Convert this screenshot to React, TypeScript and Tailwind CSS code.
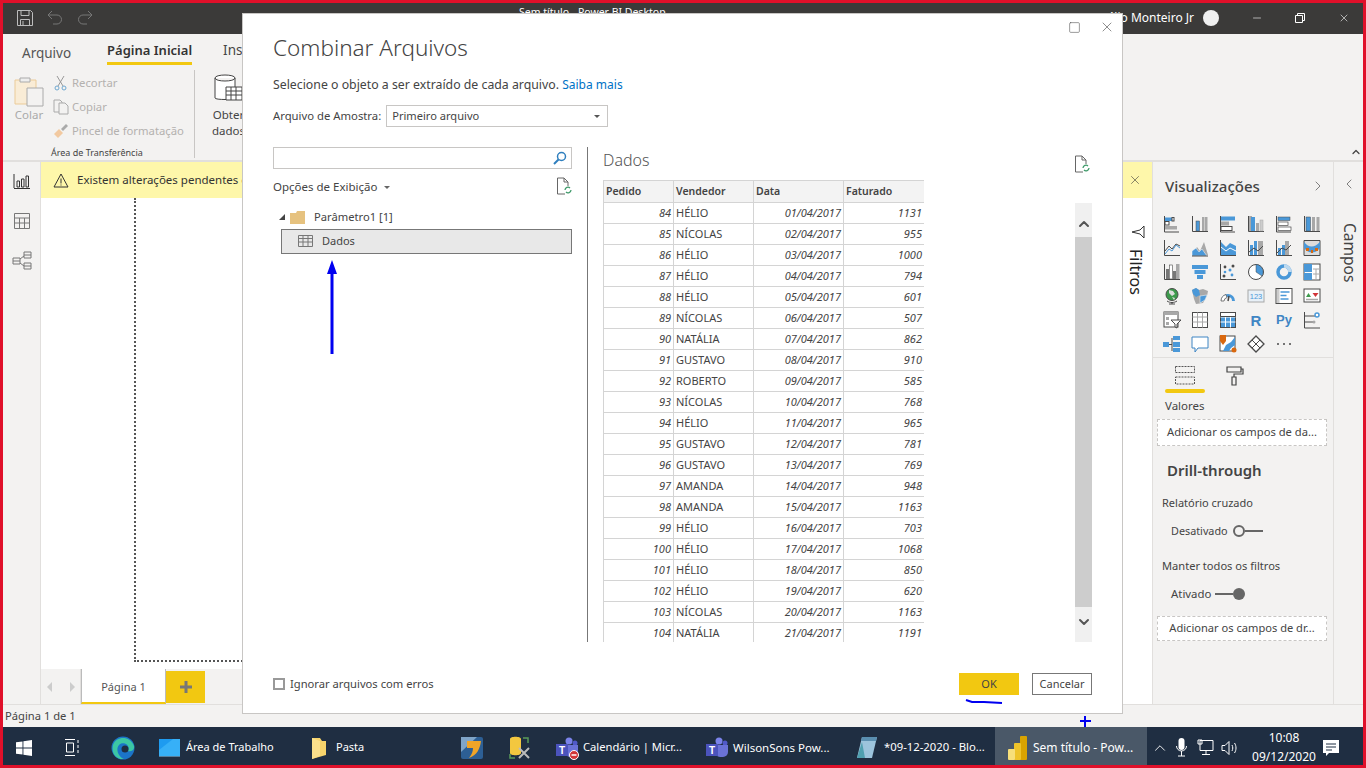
import type { ReactNode } from "react";
import { ChevronDown, ChevronLeft, ChevronRight, ChevronUp, Minus, Square, X } from "lucide-react";

const B = "#4a98d8";
const D = "#4a4a4a";
const G = "#a8a8a8";
const O = "#d9680f";

const rows: [number, string, string, number][] = [
    [84, "HÉLIO", "01/04/2017", 1131],
    [85, "NÍCOLAS", "02/04/2017", 955],
    [86, "HÉLIO", "03/04/2017", 1000],
    [87, "HÉLIO", "04/04/2017", 794],
    [88, "HÉLIO", "05/04/2017", 601],
    [89, "NÍCOLAS", "06/04/2017", 507],
    [90, "NATÁLIA", "07/04/2017", 862],
    [91, "GUSTAVO", "08/04/2017", 910],
    [92, "ROBERTO", "09/04/2017", 585],
    [93, "NÍCOLAS", "10/04/2017", 768],
    [94, "HÉLIO", "11/04/2017", 965],
    [95, "GUSTAVO", "12/04/2017", 781],
    [96, "GUSTAVO", "13/04/2017", 769],
    [97, "AMANDA", "14/04/2017", 948],
    [98, "AMANDA", "15/04/2017", 1163],
    [99, "HÉLIO", "16/04/2017", 703],
    [100, "HÉLIO", "17/04/2017", 1068],
    [101, "HÉLIO", "18/04/2017", 850],
    [102, "HÉLIO", "19/04/2017", 620],
    [103, "NÍCOLAS", "20/04/2017", 1163],
    [104, "NATÁLIA", "21/04/2017", 1191],
];

const axes = <path d="M1.5 1v15.5H17" fill="none" stroke={D} />;
const vaxis = <path d="M1.5 1v15.5M1.5 16.5H17" fill="none" stroke={D} />;
const hbars = <path d="M1.5 1v16M1.5 17H16" fill="none" stroke={D} />;

const vizIcons: ReactNode[] = [
    <>{hbars}<rect x="2" y="2.5" width="7" height="3.5" fill={B} /><rect x="9" y="2.5" width="2" height="3.5" fill="#fff" stroke={D} /><rect x="2" y="6.5" width="4" height="3.5" fill="#fff" stroke={D} /><rect x="2" y="11" width="12" height="3.5" fill={G} /></>,
    <>{vaxis}<rect x="5" y="6" width="3.5" height="10" fill={B} stroke={D} strokeWidth=".5" /><rect x="11" y="2" width="2.5" height="14" fill={G} /><rect x="14" y="2" width="2.5" height="14" fill={G} /></>,
    <>{hbars}<rect x="2" y="1.5" width="14" height="4" fill={B} /><rect x="2" y="6.5" width="8" height="4" fill={G} /><rect x="2" y="11.5" width="11" height="4" fill="#fff" stroke={D} /></>,
    <>{vaxis}<rect x="2" y="1" width="3" height="15" fill={G} /><rect x="4" y="2" width="4" height="14" fill={B} /><rect x="9" y="8" width="3" height="8" fill={G} /><rect x="13" y="5" width="3" height="11" fill="#ccc" stroke={G} strokeWidth=".5" /></>,
    <>{hbars}<rect x="3" y="2" width="12" height="3.5" fill={B} stroke={D} strokeWidth=".5" /><rect x="3" y="7" width="10" height="3.5" fill="#fff" stroke={D} strokeWidth=".7" /><rect x="3" y="12" width="13" height="3.5" fill="#fff" stroke={D} strokeWidth=".7" /></>,
    <>{vaxis}<rect x="3" y="2" width="4.5" height="14" fill={B} stroke={D} strokeWidth=".5" /><rect x="9" y="2" width="3" height="14" fill={G} /><rect x="13.5" y="2" width="3" height="14" fill={G} /></>,
    <>{axes}<path d="M2 12l4-5 3 3 4-5 4 2" fill="none" stroke={D} /><path d="M2 15l4-5 3 2 4-6 4 3" fill="none" stroke={B} /></>,
    <><path d="M1 16l5-8 3 4 4-9 4 13z" fill={G} /><path d="M1 12v5h15l-5-7-3 3-3-4z" fill={B} stroke="#fff" strokeWidth=".5" /><path d="M1 17h16" stroke={D} /></>,
    <>{axes}<path d="M2 3l5 5 4-4 6 3v9H2z" fill={B} /><path d="M2 8l5 4 4-3 6 3" fill="none" stroke="#fff" /></>,
    <>{vaxis}<rect x="3" y="6" width="3" height="10" fill={B} /><rect x="7" y="2" width="3" height="14" fill={B} /><rect x="11" y="2" width="5" height="14" fill={G} /><path d="M2 13l5-4 4 3 5-5" fill="none" stroke={D} /></>,
    <>{vaxis}<rect x="3" y="9" width="3" height="7" fill={B} /><rect x="7" y="6" width="3" height="10" fill={B} /><rect x="10" y="2" width="4" height="14" fill={G} /><path d="M2 14l5-5 4 2 5-5" fill="none" stroke={D} /></>,
    <><path d="M1 1.5h16v15H1z" fill="#dcdcdc" stroke={D} /><path d="M1 3c5 6 10 6 16 0v6c-5 6-11 6-16 0z" fill={B} /><path d="M3 9h3v3H3zM12 9h3v3h-3zM8 11h2v3H8z" fill={O} /></>,
    <>{vaxis}<rect x="3" y="6" width="3" height="10" fill="#777" /><rect x="6.5" y="2" width="3" height="14" fill="#fff" stroke={D} strokeWidth=".6" /><rect x="10" y="8" width="3" height="8" fill="#777" /><rect x="13" y="1" width="3.5" height="15" fill={G} /></>,
    <><rect x="1" y="2" width="16" height="4" fill={B} /><rect x="3.5" y="7" width="11" height="4" fill={B} /><rect x="6" y="12" width="6" height="4" fill={B} /></>,
    <>{axes}<circle cx="6" cy="4" r="1.4" fill={D} /><circle cx="11" cy="7" r="1.5" fill={B} /><circle cx="6" cy="9" r="1.3" fill={B} /><circle cx="14" cy="3" r="1.5" fill={D} /><circle cx="5" cy="13" r="1.5" fill={D} /><circle cx="13" cy="12" r="1.4" fill={B} /></>,
    <><circle cx="9" cy="9" r="7.5" fill="#fff" stroke={D} /><path d="M9 9V1.5a7.5 7.5 0 0 1 6 11.5z" fill={B} stroke={D} strokeWidth=".5" /></>,
    <><circle cx="9" cy="9" r="6" fill="none" stroke={B} strokeWidth="3.5" /><path d="M9 3a6 6 0 0 1 6 6" fill="none" stroke="#bcd9f0" strokeWidth="3.5" /></>,
    <><rect x="1" y="1" width="16" height="16" fill="#fff" stroke={D} /><rect x="1" y="1" width="8" height="8" fill={B} /><rect x="1" y="10" width="8" height="7" fill={B} /><path d="M10 6h7M13 6v11M10 11h7" stroke={G} /></>,
    <><circle cx="9" cy="7.5" r="6" fill="#3d9a4c" stroke={D} /><path d="M6 3l4 1 2 3-3 2-3-3zM9 10l3 1-1 2z" fill="#ddd" /><path d="M4 14c3 2 7 2 10 0M9 15v2M6 17h6" fill="none" stroke={D} /></>,
    <><path d="M1 3l4-2 3 2 4-1 5 2-1 5-4 7-7 1-2-5z" fill={G} /><path d="M1 3l4-2 3 2 1 5-4 2-3-3z" fill={B} /><path d="M9 9l7-1-2 5-5 3z" fill={B} stroke="#fff" strokeWidth=".5" /></>,
    <><path d="M2 14a7 7 0 0 1 14 0h-3a4 4 0 0 0-8 0z" fill={B} /><path d="M2 14a7 7 0 0 1 5-6.5l1 3A4 4 0 0 0 5 14z" fill="#fff" stroke={D} strokeWidth=".7" /><path d="M9 14l1-5" stroke={D} strokeWidth="1.5" /></>,
    <><rect x="1" y="3" width="16" height="12" fill="#e8f0f7" stroke={G} /><text x="9" y="12" textAnchor="middle" fontSize="7.5" fill={B} fontFamily="Liberation Sans, sans-serif">123</text></>,
    <><rect x="1" y="1.5" width="16" height="15" fill="#fff" stroke={D} /><rect x="2" y="2" width="2.5" height="14" fill="#ccc" /><path d="M5.5 5h9M5.5 8.5h6M5.5 12h8" stroke={B} strokeWidth="1.4" /></>,
    <><rect x="1" y="2" width="16" height="13" fill="#fff" stroke={D} /><path d="M3 10l2.5-4L8 10z" fill="#3d9a4c" /><path d="M9.5 6h6L12.5 10z" fill="#d13438" /><path d="M3 12.5h12" stroke={G} strokeWidth="1.5" /></>,
    <><rect x="1" y="1" width="14" height="15" fill="#fff" stroke={D} /><path d="M1 1h14v3H1z" fill={G} /><path d="M3 6h3v3H3zM3 11h3v3H3z" fill={G} /><path d="M8 9h10l-4 4v4l-2-1v-3z" fill="#fff" stroke={D} /></>,
    <><rect x="1.5" y="1.5" width="15" height="15" fill="#fff" stroke={D} /><path d="M1.5 6h15M1.5 11h15M6.5 1.5v15M11.5 1.5v15" stroke={G} /></>,
    <><rect x="1.5" y="1.5" width="15" height="15" fill="#fff" stroke={D} /><rect x="2" y="6" width="14" height="10" fill={B} /><path d="M1.5 6h15M1.5 11h15M6.5 6v10M11.5 1.5v15" stroke="#fff" /><path d="M1.5 1.5h15v4h-15z" fill="none" stroke={D} /></>,
    <text x="9" y="15" textAnchor="middle" fontSize="15" fontWeight="700" fill="#3f86c4" fontFamily="Liberation Sans, sans-serif">R</text>,
    <text x="9" y="13" textAnchor="middle" fontSize="13" fontWeight="700" fill="#3f86c4" fontFamily="Liberation Sans, sans-serif">Py</text>,
    <><path d="M1.5 1v16M1.5 17H17" fill="none" stroke={D} /><path d="M2 5h10M2 11h8" stroke={D} /><circle cx="14" cy="4" r="2" fill="#fff" stroke={B} strokeWidth="1.5" /><circle cx="11" cy="11" r="1.5" fill={G} /></>,
    <><rect x="0" y="7" width="6" height="5" fill={B} /><path d="M6 9.5h3M9 3v13" stroke={D} /><rect x="10" y="1" width="7" height="4" fill={B} /><rect x="10" y="7" width="7" height="5" fill={B} /><rect x="10" y="13" width="7" height="4" fill={B} /></>,
    <path d="M1 2h16v11H7l-3 4v-4H1z" fill="#fff" stroke="#3f86c4" />,
    <><rect x="1" y="1" width="15" height="15" fill="#fff" stroke={D} /><path d="M4 16l3-6 5-3 4-5v8l-4 3-2 3z" fill={B} /><path d="M1 0h6v6l-3 4-3-4z" fill={O} /><circle cx="15" cy="15" r="2.5" fill={O} /></>,
    <><path d="M9 1l8 8-8 8-8-8z" fill="#fff" stroke={D} strokeWidth="1.3" /><path d="M5 5l8 8M13 5l-8 8" stroke={D} /></>,
    <><circle cx="3" cy="9" r="1" fill={D} /><circle cx="9" cy="9" r="1" fill={D} /><circle cx="15" cy="9" r="1" fill={D} /></>,
];

function VizIcon({ children }: { children: ReactNode }) {
    return (
        <svg width="18" height="18" viewBox="0 0 18 18">
            {children}
        </svg>
    );
}

function RefreshDoc() {
    return (
        <svg width="16" height="18" viewBox="0 0 16 18" fill="none">
            <path d="M9 17H1.5V1H8l4 4v4" stroke="#666" />
            <path d="M8 1v4h4" stroke="#666" />
            <path d="M9 13a3 3 0 0 1 5-2M15 13a3 3 0 0 1-5 2" stroke="#3f9a6a" strokeWidth="1.3" />
        </svg>
    );
}

function TaskItem({ w, pl, icon, label, bg, size, gap }: { w: string; pl: string; icon: ReactNode; label?: string; bg?: string; size?: string; gap?: string }) {
    return (
        <div className={`flex h-full shrink-0 items-center pt-[3px] ${gap ?? "gap-[6px]"} ${w} ${pl} ${bg ?? ""}`}>
            {icon}
            {label && <span className={`whitespace-nowrap text-white ${size ?? "text-[12px]"}`}>{label}</span>}
        </div>
    );
}

function TeamsIcon({ busy }: { busy?: boolean }) {
    return (
        <svg width="24" height="24" viewBox="0 0 24 24">
            <circle cx="14" cy="5" r="3.5" fill="#7b83eb" />
            <circle cx="20" cy="7" r="2.5" fill="#5059c9" />
            <path d="M10 9h13v7a5 5 0 0 1-5 5h-3a5 5 0 0 1-5-5z" fill="#6a72d8" />
            <rect x="1" y="8" width="12" height="12" fill="#4b53bc" />
            <text x="7" y="18" textAnchor="middle" fontSize="10" fontWeight="700" fill="#fff" fontFamily="Liberation Sans, sans-serif">T</text>
            {busy && <circle cx="19" cy="19" r="4.5" fill="#d13438" stroke="#fff" />}
            {busy && <path d="M16.5 19h5" stroke="#fff" strokeWidth="1.5" />}
        </svg>
    );
}

export default function App() {
    return (
        <div className="relative flex h-[768px] w-[1366px] flex-col overflow-hidden border-[3px] border-[#e0102a] bg-[#f3f2f1] font-['Noto_Sans',sans-serif] text-[12px] text-[#444]">
            {/* Title bar */}
            <div className="flex h-[31px] shrink-0 items-center bg-[#3b3a39] pb-[2px] pl-[14px] text-white">
                <svg width="16" height="16" viewBox="0 0 16 16" fill="none" stroke="#bdbdbd">
                    <path d="M.5.5h13l2 2v13H.5z" />
                    <path d="M4 .5v5h8v-5M3.5 15.5V9.5h9v6M6 11v4" />
                </svg>
                <svg className="ml-[14px]" width="16" height="16" viewBox="0 0 16 16" fill="none" stroke="#777">
                    <path d="M1 5h9a4.5 4.5 0 0 1 0 9H6M1 5l4-4M1 5l4 4" />
                </svg>
                <svg className="ml-[14px]" width="16" height="16" viewBox="0 0 16 16" fill="none" stroke="#777">
                    <path d="M15 5H6a4.5 4.5 0 0 0 0 9h4M15 5l-4-4M15 5l-4 4" />
                </svg>
                <span className="ml-[426px] -mt-[9px] whitespace-nowrap text-[10.5px]">Sem título - Power BI Desktop</span>
                <span className="ml-auto whitespace-nowrap text-[12px]">Hélio Monteiro Jr</span>
                <div className="ml-[9px] h-[16px] w-[16px] rounded-full bg-[#f0f0f0]" />
                <Minus className="ml-[32px]" size={12} strokeWidth={1.2} />
                <svg className="ml-[32px]" width="10" height="10" viewBox="0 0 10 10" fill="none" stroke="#fff">
                    <path d="M.5 2.5h7v7h-7zM2.5 2.5v-2h7v7h-2" />
                </svg>
                <X className="ml-[33px] mr-[13px]" size={12} strokeWidth={1.2} />
            </div>

            {/* Ribbon */}
            <div className="relative h-[128px] shrink-0 border-b-2 border-[#e1dfdd]">
                <div className="flex h-[32px] items-start">
                    <span className="ml-[19px] mt-[9px] text-[13.5px] leading-[20px] text-[#555]">Arquivo</span>
                    <span className="ml-[36px] mt-[6px] border-b-[3px] border-[#f2c811] pb-[2px] text-[13px] font-semibold leading-[20px] text-[#333]">Página Inicial</span>
                    <span className="ml-[31px] mt-[6px] text-[13.5px] leading-[20px] text-[#444]">Inserir</span>
                </div>
                <div className="flex h-[92px]">
                    <div className="mt-[4px] flex h-[88px] w-[192px] shrink-0 flex-col border-r border-[#c8c6c4]">
                        <div className="flex h-[76px] shrink-0">
                            <div className="ml-[11px] mt-[5px] flex w-[30px] flex-col items-center">
                                <svg width="30" height="32" viewBox="0 0 30 32" fill="none">
                                    <path d="M1 5h21v24H1z" fill="#f9ecd6" stroke="#ebcb98" />
                                    <path d="M6 3h10v4H6z" fill="#eee" stroke="#aaa" />
                                    <path d="M13 13h16v18H13z" fill="#f3f2f1" stroke="#aaa" />
                                </svg>
                                <span className="text-[11.5px] leading-[16px] text-[#aaa]">Colar</span>
                            </div>
                            <div className="ml-[9px] mt-[3px] flex flex-col gap-[4px] text-[11.3px] text-[#b3b1af]">
                                <div className="flex h-[20px] items-center gap-[3px]">
                                    <svg width="16" height="16" viewBox="0 0 16 16" fill="none" stroke="#999"><path d="M4 1l6 10M11 1L5 11" /><circle cx="4" cy="13" r="2" stroke="#6fa8d0" /><circle cx="11" cy="13" r="2" stroke="#6fa8d0" /></svg>
                                    <span>Recortar</span>
                                </div>
                                <div className="flex h-[20px] items-center gap-[3px]">
                                    <svg width="16" height="16" viewBox="0 0 16 16" fill="none" stroke="#aaa"><path d="M1 1h6l2 2v10H1z" /><path d="M6 4h6l3 3v8H6z" fill="#f3f2f1" /></svg>
                                    <span>Copiar</span>
                                </div>
                                <div className="flex h-[20px] items-center gap-[3px]">
                                    <svg width="16" height="16" viewBox="0 0 16 16"><path d="M1 11l5-5 4 4-5 5z" fill="#f2c9a0" /><path d="M8 6l5-5 2 2-5 5z" fill="#aaa" /></svg>
                                    <span>Pincel de formatação</span>
                                </div>
                            </div>
                        </div>
                        <span className="ml-[48px] text-[9px] leading-[14px] text-[#444]">Área de Transferência</span>
                    </div>
                    <div className="ml-[17px] mt-[7px] flex flex-col items-center text-[11.5px] leading-[16px]">
                        <svg width="30" height="32" viewBox="0 0 30 32" fill="none" stroke="#444">
                            <path d="M1 5v20c0 2 20 2 20 0V5M1 5c0-4 20-4 20 0s-20 4-20 0" fill="#fff" />
                            <path d="M12 14h16v13H12zM12 18h16M12 22h16M17 14v13M22 14v13" fill="#fff" />
                        </svg>
                        <span className="mt-[2px]">Obter</span>
                        <span>dados</span>
                    </div>
                </div>
                <ChevronUp className="absolute bottom-[2px] right-[1px]" size={12} strokeWidth={2.5} />
            </div>

            {/* Main */}
            <div className="flex min-h-0 flex-1">
                <div className="flex w-[38px] shrink-0 flex-col items-center gap-[21px] border-r border-[#e1dfdd] pt-[11px]">
                    <svg width="18" height="18" viewBox="0 0 18 18" fill="none" stroke="#333"><path d="M1 1v14M1 15.5h16M4 8h2.5v6H4zM8.5 6H11v8H8.5zM13 3h2.5v11H13z" /></svg>
                    <svg width="18" height="18" viewBox="0 0 18 18" fill="none" stroke="#777"><path d="M1.5 1.5h15v15h-15zM1.5 6h15M1.5 11h15M6.5 6v10M11.5 6v10" /></svg>
                    <svg width="20" height="20" viewBox="0 0 20 20" fill="none" stroke="#777"><path d="M1 7h7v6H1zM12 1h7v6h-7zM12 12h7v6h-7zM1 10h7M12 4h7M12 15h7M8 8l4-3M8 12l4 3" /></svg>
                </div>
                <div className="flex min-w-0 flex-1 flex-col">
                    <div className="flex h-[36px] shrink-0 items-center bg-[#fef7aa] pl-[12px]">
                        <svg width="16" height="15" viewBox="0 0 16 15" fill="none" stroke="#333"><path d="M8 1l7 13H1zM8 5.5v5M8 11.5v1" /></svg>
                        <span className="ml-[8px] whitespace-nowrap text-[11.5px] text-[#333]">Existem alterações pendentes em suas consultas que não foram aplicadas.</span>
                    </div>
                    <div className="flex-1 bg-white pl-[93px]">
                        <div className="h-[464px] border-b-2 border-l-2 border-dotted border-[#555]" />
                    </div>
                    <div className="flex h-[35px] shrink-0 items-end">
                        <div className="flex h-[35px] w-[40px] items-center justify-center gap-[18px] border-r border-[#e1dfdd] text-[#ccc]">
                            <span className="h-0 w-0 border-y-[5px] border-r-[5px] border-y-transparent border-r-[#ccc]" />
                            <span className="h-0 w-0 border-y-[5px] border-l-[5px] border-y-transparent border-l-[#ccc]" />
                        </div>
                        <div className="flex h-[35px] w-[85px] items-center justify-center border-x border-b-2 border-[#bbb] border-b-[#f2c811] bg-white pt-[3px] text-[11px] text-[#555]">Página 1</div>
                        <div className="mb-[1px] flex h-[32px] w-[39px] items-center justify-center bg-[#f2c811]">
                            <svg width="12" height="12" viewBox="0 0 12 12"><path d="M0 4.5h4.5V0h3v4.5H12v3H7.5V12h-3V7.5H0z" fill="#777" /></svg>
                        </div>
                    </div>
                </div>
                <div className="flex w-[29px] shrink-0 flex-col items-center bg-white">
                    <div className="flex h-[36px] w-full items-center justify-center bg-[#fef7aa] pr-[5px]">
                        <X className="text-[#333]" size={14} strokeWidth={1} />
                    </div>
                    <svg className="mt-[27px]" width="14" height="14" viewBox="0 0 14 14" fill="none" stroke="#333"><path d="M13 1v12L9 9 1 7l8-2z" /></svg>
                    <span className="mr-[3px] mt-[10px] text-[16px] text-[#222] [writing-mode:vertical-rl]">Filtros</span>
                </div>
                <div className="flex w-[182px] shrink-0 flex-col border-x border-[#e1dfdd]">
                    <div className="flex h-[50px] shrink-0 items-center justify-between pb-[2px] pl-[12px] pr-[7px]">
                        <span className="text-[15px] font-medium text-[#444]">Visualizações</span>
                        <ChevronRight size={16} strokeWidth={1} />
                    </div>
                    <div className="grid shrink-0 grid-cols-[repeat(6,28px)] auto-rows-[24px] pl-[10px] pt-[3px]">
                        {vizIcons.map((icon, i) => (
                            <VizIcon key={i}>{icon}</VizIcon>
                        ))}
                    </div>
                    <div className="mt-[-2px] flex h-[36px] shrink-0 items-start gap-[21px] border-t border-[#e1dfdd] pl-[12px] pt-[8px]">
                        <div className="flex w-[40px] flex-col items-center">
                            <svg width="20" height="19" viewBox="0 0 20 19" fill="none" stroke="#555" strokeDasharray="2 1"><path d="M.5.5h19v6H.5zM.5 11h19v7H.5z" /></svg>
                            <div className="mt-[4px] h-[4px] w-[40px] shrink-0 rounded-full bg-[#f2c811]" />
                        </div>
                        <svg width="18" height="20" viewBox="0 0 18 20" fill="none" stroke="#444" strokeWidth="1.2"><path d="M1 1h14v5H1zM15 3h2v5H8v3M6 11h4v8H6z" /></svg>
                    </div>
                    <span className="ml-[12px] mt-[5px] text-[11.5px] leading-[16px]">Valores</span>
                    <div className="ml-[4px] mr-[6px] mt-[5px] flex h-[27px] shrink-0 items-center justify-center border border-dashed border-[#c8c6c4] bg-white text-[11.2px]">Adicionar os campos de da...</div>
                    <span className="ml-[14px] mt-[13px] text-[15px] font-semibold leading-[22px]">Drill-through</span>
                    <span className="ml-[9px] mt-[14px] text-[11px] leading-[16px]">Relatório cruzado</span>
                    <div className="ml-[18px] mt-[12px] flex h-[16px] items-center text-[10.8px]">
                        <span className="mr-[5px]">Desativado</span>
                        <span className="h-[12px] w-[12px] rounded-full border-2 border-[#666]" />
                        <span className="h-[2px] w-[18px] bg-[#666]" />
                    </div>
                    <span className="ml-[9px] mt-[19px] text-[11.1px] leading-[16px]">Manter todos os filtros</span>
                    <div className="ml-[18px] mt-[12px] flex h-[16px] items-center text-[11.4px]">
                        <span className="mr-[4px]">Ativado</span>
                        <span className="h-[2px] w-[18px] bg-[#666]" />
                        <span className="h-[12px] w-[12px] rounded-full bg-[#666]" />
                    </div>
                    <div className="ml-[4px] mr-[6px] mt-[14px] flex h-[25px] shrink-0 items-center justify-center border border-dashed border-[#c8c6c4] bg-white text-[11.1px]">Adicionar os campos de dr...</div>
                </div>
                <div className="flex w-[29px] shrink-0 flex-col items-center pl-[1px]">
                    <ChevronLeft className="mt-[14px]" size={16} strokeWidth={1} />
                    <span className="mt-[31px] text-[15.5px] text-[#444] [writing-mode:vertical-rl]">Campos</span>
                </div>
            </div>

            {/* Status bar */}
            <div className="flex h-[23px] shrink-0 items-center border-t border-[#e1dfdd] pl-[2px] text-[11.2px]">Página 1 de 1</div>

            {/* Taskbar */}
            <div className="flex h-[38px] shrink-0 items-center bg-[#1f2e42]">
                <TaskItem w="w-[48px]" pl="pl-[13px]" icon={<svg width="16" height="16" viewBox="0 0 16 16"><path d="M0 2.3l6.5-.9V7.6H0zM7.4 1.3L16 0v7.6H7.4zM0 8.4h6.5v6.2L0 13.7zM7.4 8.4H16V16l-8.6-1.2z" fill="#fff" /></svg>} />
                <TaskItem w="w-[47px]" pl="pl-[13px]" icon={<svg width="17" height="17" viewBox="0 0 17 17" fill="none" stroke="#fff"><path d="M1 .5h10M1 16.5h10M2.5 4h7v9h-7zM14 1v3M14 6v3M14 11v3" /></svg>} />
                <TaskItem w="w-[48px]" pl="pl-[13px]" icon={<svg width="24" height="24" viewBox="0 0 24 24"><circle cx="12" cy="12" r="11.5" fill="#1b74c8" /><path d="M2 9C5 0 19-1 23 10c1 4-3 6-6 5 3-7-6-10-9-6-3 3-2 11 5 14C5 24 0 17 2 9z" fill="#3cc6a4" /><circle cx="14" cy="13" r="3.5" fill="#1f2e42" /></svg>} />
                <TaskItem w="w-[152px]" pl="pl-[13px]" size="text-[11px]" label="Área de Trabalho" icon={<svg width="21" height="19" viewBox="0 0 21 19"><rect width="21" height="17" y="1" fill="#1e9bf0" /><path d="M0 18h21" stroke="#8fd0f7" /><path d="M0 12L14 1h7v17H0z" fill="#37b0f7" /></svg>} />
                <TaskItem w="w-[149px]" pl="pl-[13px]" gap="gap-[9px]" size="text-[11px]" label="Pasta" icon={<svg width="16" height="24" viewBox="0 0 16 24"><path d="M1 2h8l2 3h4v14l-14 4z" fill="#f6d36b" /><path d="M1 2v21l8-3V5z" fill="#fbe08c" /></svg>} />
                <TaskItem w="w-[48px]" pl="pl-[13px]" icon={<svg width="24" height="24" viewBox="0 0 24 24"><rect x="1" y="1" width="22" height="22" rx="2" fill="#2d5f95" /><path d="M1 1h16L1 16z" fill="#7fa5c9" /><path d="M7 5h14c-1 8-4 14-12 17 3-4 4-7 4-10H7z" fill="#f0a428" /></svg>} />
                <TaskItem w="w-[47px]" pl="pl-[13px]" icon={<svg width="24" height="24" viewBox="0 0 24 24"><path d="M2 3c0-3 11-3 11 0v14c0 3-11 3-11 0z" fill="#f3c73f" /><path d="M15 2h5v5M2 18v4h5" fill="none" stroke="#5a9a5a" strokeWidth="1.5" /><path d="M11 12l10 10M21 12L11 22" stroke="#bbb" strokeWidth="2" /></svg>} />
                <TaskItem w="w-[150px]" pl="pl-[13px]" gap="gap-[4px]" size="text-[11.2px]" label="Calendário | Micr..." icon={<TeamsIcon busy />} />
                <TaskItem w="w-[151px]" pl="pl-[13px]" gap="gap-[4px]" size="text-[11.5px]" label="WilsonSons Pow..." icon={<TeamsIcon />} />
                <TaskItem w="w-[152px]" pl="pl-[13px]" size="text-[11.3px]" label="*09-12-2020 - Blo..." icon={<svg width="22" height="24" viewBox="0 0 22 24"><path d="M6 1h15l-5 21H1z" fill="#9cc4dc" /><path d="M6 1h15l-1 4H5z" fill="#5a8fb0" /><path d="M1 22l5-16 3 16z" fill="#4fa0b0" /></svg>} />
                <TaskItem w="w-[152px]" pl="pl-[13px]" bg="bg-[#4a5868]" label="Sem título - Pow..." icon={<svg width="19" height="24" viewBox="0 0 19 24"><rect x="12" y="0" width="7" height="24" rx="1" fill="#d9a300" /><rect x="6" y="7" width="7" height="17" rx="1" fill="#eec32a" /><rect x="0" y="13" width="7" height="11" rx="1" fill="#f7df7a" /></svg>} />
                <ChevronUp className="ml-[4px] mt-[3px] text-white" size={18} strokeWidth={1.2} />
                <svg className="ml-[7px] mt-[3px]" width="11" height="19" viewBox="0 0 11 19"><rect x="2.5" y="0" width="6" height="12" rx="3" fill="#fff" /><path d="M.5 8a5 5 0 0 0 10 0M5.5 13v5M2 18h7" fill="none" stroke="#fff" /></svg>
                <svg className="ml-[10px] mt-[3px]" width="17" height="17" viewBox="0 0 17 17" fill="none" stroke="#fff"><path d="M3 1.5h13v10H3zM1 1h4v4H1zM9 11.5v4M5 15.5h8" /></svg>
                <svg className="ml-[7px] mt-[3px]" width="18" height="16" viewBox="0 0 18 16" fill="none" stroke="#fff"><path d="M1 5.5h3l4-4v13l-4-4H1zM11 5c1 2 1 4 0 6M13.5 3c2 3 2 7 0 10" /></svg>
                <div className="ml-[9px] flex w-[72px] flex-col items-center pt-[2px] text-[12px] leading-[19px] text-white">
                    <span>10:08</span>
                    <span>09/12/2020</span>
                </div>
                <svg className="ml-[3px] mt-[3px]" width="16" height="16" viewBox="0 0 16 16"><path d="M0 0h16v13H6l-3 3v-3H0z" fill="#fff" /><path d="M3 4h10M3 7h10M3 10h6" stroke="#1f2e42" /></svg>
            </div>

            {/* Dialog */}
            <div className="absolute left-[239px] top-[10px] z-10 flex h-[701px] w-[881px] flex-col border border-[#c8c6c4] bg-white px-[30px] pt-[19px] text-[11.3px] text-[#444]">
                <Square className="absolute right-[41px] top-[7px]" size={13} strokeWidth={1} />
                <X className="absolute right-[7px] top-[5px] text-[#555]" size={16} strokeWidth={1} />
                <h1 className="h-[30px] text-[22.5px] font-light leading-[30px] text-[#444]">Combinar Arquivos</h1>
                <p className="mt-[12px] h-[20px] text-[12.3px] leading-[20px]">
                    Selecione o objeto a ser extraído de cada arquivo. <span className="text-[12px] text-[#0072c6]">Saiba mais</span>
                </p>
                <div className="mt-[10px] flex h-[22px] items-center gap-[5px]">
                    <span>Arquivo de Amostra:</span>
                    <div className="flex h-[22px] w-[222px] items-center justify-between border border-[#c8c6c4] px-[5px]">
                        <span className="text-[11.1px]">Primeiro arquivo</span>
                        <span className="mr-[2px] h-0 w-0 border-x-[3px] border-t-[3px] border-x-transparent border-t-[#555]" />
                    </div>
                </div>
                <div className="mt-[20px] flex h-[495px]">
                    <div className="flex w-[299px] shrink-0 flex-col">
                        <div className="flex h-[22px] items-center justify-end border border-[#c8c6c4] pr-[4px]">
                            <svg width="14" height="14" viewBox="0 0 14 14" fill="none" stroke="#2f7fbe" strokeWidth="1.5"><circle cx="8.5" cy="5.5" r="4" /><path d="M5.5 8.5L1 13" strokeWidth="2" /></svg>
                        </div>
                        <div className="mt-[6px] flex h-[24px] items-center">
                            <span className="text-[11.5px]">Opções de Exibição</span>
                            <span className="ml-[7px] h-0 w-0 border-x-[3px] border-t-[3px] border-x-transparent border-t-[#666]" />
                            <span className="ml-auto mt-[-2px]"><RefreshDoc /></span>
                        </div>
                        <div className="mt-[6px] flex h-[24px] items-center pl-[6px]">
                            <span className="h-0 w-0 border-b-[6px] border-l-[6px] border-b-[#444] border-l-transparent" />
                            <svg className="ml-[5px]" width="16" height="13" viewBox="0 0 16 13"><path d="M0 2h6l1-2h8v13H0z" fill="#e6c27f" /></svg>
                            <span className="ml-[8px] text-[11.2px]">Parâmetro1 [1]</span>
                        </div>
                        <div className="ml-[8px] flex h-[25px] items-center border border-[#777] bg-[#e8e8e8] pl-[16px]">
                            <svg width="15" height="13" viewBox="0 0 15 13" fill="none" stroke="#777"><path d="M.5.5h14v11H.5zM.5 3.5h14M.5 7h14M5 .5v11M10 .5v11" /></svg>
                            <span className="ml-[9px] text-[11px]">Dados</span>
                        </div>
                    </div>
                    <div className="ml-[15px] w-[1px] shrink-0 bg-[#777]" />
                    <div className="ml-[15px] flex w-[489px] shrink-0 flex-col">
                        <div className="flex h-[33px] shrink-0 items-start justify-between">
                            <span className="text-[16px] leading-[26px] font-light text-[#555]">Dados</span>
                            <span className="mr-[2px] mt-[8px]"><RefreshDoc /></span>
                        </div>
                        <div className="flex min-h-0 flex-1">
                            <div className="h-full w-[321px] overflow-hidden">
                                <table className="w-[321px] table-fixed border-collapse text-[11px]">
                                    <colgroup>
                                        <col className="w-[70px]" />
                                        <col className="w-[80px]" />
                                        <col className="w-[90px]" />
                                        <col className="w-[81px]" />
                                    </colgroup>
                                    <thead>
                                        <tr className="h-[22px] bg-[#f3f3f3] text-left">
                                            {["Pedido", "Vendedor", "Data", "Faturado"].map((h) => (
                                                <th key={h} className="border border-[#d4d4d4] px-[2px] text-[10.5px] font-semibold">{h}</th>
                                            ))}
                                        </tr>
                                    </thead>
                                    <tbody>
                                        {rows.map(([id, seller, date, total]) => (
                                            <tr key={id} className="h-[21px]">
                                                <td className="border border-[#d4d4d4] px-[2px] text-right italic">{id}</td>
                                                <td className="border border-[#d4d4d4] px-[2px]">{seller}</td>
                                                <td className="border border-[#d4d4d4] px-[2px] text-right italic">{date}</td>
                                                <td className="border border-[#d4d4d4] px-[2px] text-right italic">{total}</td>
                                            </tr>
                                        ))}
                                    </tbody>
                                </table>
                            </div>
                            <div className="ml-auto mt-[23px] flex w-[17px] flex-col items-center bg-[#f0f0f0]">
                                <ChevronUp className="mt-[13px] text-[#555]" size={16} strokeWidth={3} />
                                <div className="mt-[5px] h-[370px] w-full bg-[#cdcdcd]" />
                                <ChevronDown className="mt-[7px] text-[#555]" size={16} strokeWidth={3} />
                            </div>
                        </div>
                    </div>
                </div>
                <div className="mt-[31px] flex h-[22px] items-center">
                    <span className="h-[12px] w-[12px] border-2 border-[#999]" />
                    <span className="ml-[5px] text-[11.2px]">Ignorar arquivos com erros</span>
                    <div className="ml-auto flex h-[22px] w-[60px] items-center justify-center bg-[#f2c811] text-[11px]">OK</div>
                    <div className="ml-[13px] flex h-[22px] w-[60px] items-center justify-center border border-[#777] text-[11px]">Cancelar</div>
                </div>
            </div>

            {/* Hand-drawn annotations */}
            <svg className="absolute left-[323px] top-[256px] z-20" width="12" height="96" viewBox="0 0 12 96">
                <path d="M6 1L1 15h3.5V95h3V15H11z" fill="#0000f0" />
            </svg>
            <svg className="absolute left-[962px] top-[696px] z-20" width="40" height="6" viewBox="0 0 40 6" fill="none">
                <path d="M1 1l6 2h12l18 1" stroke="#0000f0" strokeWidth="2" />
            </svg>
            <svg className="absolute left-[1077px] top-[713px] z-20" width="11" height="11" viewBox="0 0 11 11">
                <path d="M4 0h2v4h5v2H6v5H4V6H0V4h4z" fill="#0000f0" />
            </svg>
        </div>
    );
}
